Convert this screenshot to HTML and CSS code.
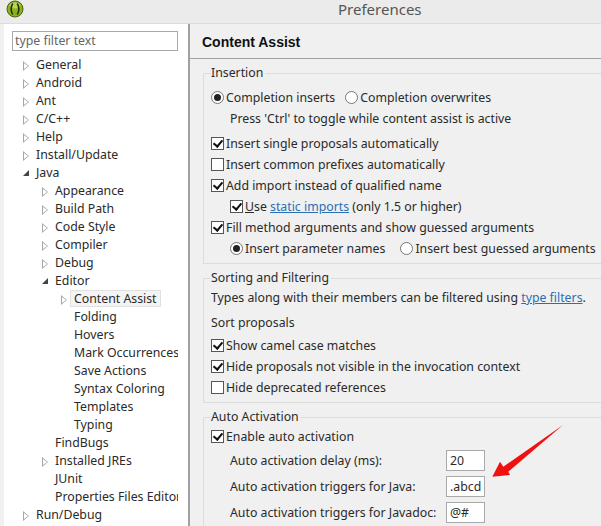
FILE: index.html
```html
<!DOCTYPE html>
<html lang="en">
<head>
  <meta charset="UTF-8">
  <title>Preferences</title>
  <link rel="stylesheet" href="styles.css">
</head>
<body>
  <header class="titlebar">
    <svg class="app-icon" width="18" height="18" viewBox="0 0 18 18">
      <circle cx="9" cy="9" r="8" fill="#8cb01e" stroke="#4d6414" stroke-width="1"/>
      <ellipse cx="9" cy="5.5" rx="5.5" ry="3" fill="#bcd65a"/>
      <path d="M6.8 3.5c-2.2 3-2.2 8 0 11M11.2 3.5c2.2 3 2.2 8 0 11" fill="none" stroke="#26330a" stroke-width="1.6"/>
    </svg>
    <span class="title">Preferences</span>
  </header>

  <main class="window">
    <aside class="sidebar">
      <div class="filter">type filter text</div>
      <ul class="tree">
        <li class="closed">General</li>
        <li class="closed">Android</li>
        <li class="closed">Ant</li>
        <li class="closed">C/C++</li>
        <li class="closed">Help</li>
        <li class="closed">Install/Update</li>
        <li class="open">Java</li>
        <li class="closed lvl1">Appearance</li>
        <li class="closed lvl1">Build Path</li>
        <li class="closed lvl1">Code Style</li>
        <li class="closed lvl1">Compiler</li>
        <li class="closed lvl1">Debug</li>
        <li class="open lvl1">Editor</li>
        <li class="closed lvl2"><span class="selected">Content Assist</span></li>
        <li class="lvl2">Folding</li>
        <li class="lvl2">Hovers</li>
        <li class="lvl2">Mark Occurrences</li>
        <li class="lvl2">Save Actions</li>
        <li class="lvl2">Syntax Coloring</li>
        <li class="lvl2">Templates</li>
        <li class="lvl2">Typing</li>
        <li class="lvl1">FindBugs</li>
        <li class="closed lvl1">Installed JREs</li>
        <li class="lvl1">JUnit</li>
        <li class="lvl1">Properties Files Editor</li>
        <li class="closed">Run/Debug</li>
      </ul>
    </aside>

    <section class="content">
      <h2 class="page-title">Content Assist</h2>

      <fieldset class="group insertion">
        <legend>Insertion</legend>
        <div class="row radios">
          <span class="opt"><i class="radio on"></i>Completion inserts</span>
          <span class="opt"><i class="radio"></i>Completion overwrites</span>
        </div>
        <div class="row note indent">Press 'Ctrl' to toggle while content assist is active</div>
        <div class="row"><i class="check on"></i>Insert single proposals automatically</div>
        <div class="row"><i class="check"></i>Insert common prefixes automatically</div>
        <div class="row"><i class="check on"></i>Add import instead of qualified name</div>
        <div class="row indent"><i class="check on"></i><span><u>U</u>se <a href="#">static imports</a> (only 1.5 or higher)</span></div>
        <div class="row"><i class="check on"></i>Fill method arguments and show guessed arguments</div>
        <div class="row radios wide indent">
          <span class="opt"><i class="radio on"></i>Insert parameter names</span>
          <span class="opt"><i class="radio"></i>Insert best guessed arguments</span>
        </div>
      </fieldset>

      <fieldset class="group sorting">
        <legend>Sorting and Filtering</legend>
        <div class="row">Types along with their members can be filtered using&nbsp;<a href="#">type filters</a>.</div>
        <div class="row sort-label">Sort proposals</div>
        <div class="row"><i class="check on"></i>Show camel case matches</div>
        <div class="row"><i class="check on"></i>Hide proposals not visible in the invocation context</div>
        <div class="row"><i class="check"></i>Hide deprecated references</div>
      </fieldset>

      <fieldset class="group activation">
        <legend>Auto Activation</legend>
        <div class="row"><i class="check on"></i>Enable auto activation</div>
        <div class="field indent"><label>Auto activation delay (ms):</label><span class="box">20</span></div>
        <div class="field indent"><label>Auto activation triggers for Java:</label><span class="box">.abcd</span></div>
        <div class="field indent"><label>Auto activation triggers for Javadoc:</label><span class="box">@#</span></div>
      </fieldset>
    </section>
  </main>

  <svg class="red-arrow" width="80" height="60" viewBox="0 0 80 60">
    <path d="M2.3 52.7 L10 37.7 L13.3 42.7 L73 1 L18.3 47.7 L20 51 Z" fill="#f01010"/>
  </svg>
</body>
</html>
```

FILE: styles.css
```css
html, body { height: 100%; }
body { margin: 0; width: 601px; height: 526px; overflow: hidden; position: relative; background: #f0f0f0; color: #2a2a2a; font-family: "Noto Sans", sans-serif; font-size: 12.3px; }

.titlebar { height: 23px; display: flex; align-items: flex-start; background: #ebebeb; border-bottom: 1px solid #dcdcdc; }
.app-icon { margin-left: 6px; }
.title { margin-left: 314px; font-size: 15px; line-height: 18px; color: #555; }

.window { display: flex; height: 502px; padding-left: 4px; }
.sidebar { width: 184px; flex: none; background: #fff; border-right: 2px solid #a0a0a0; overflow: hidden; }
.filter { margin: 7px 10px 5px 8px; height: 18px; line-height: 18px; border: 1px solid #a9a9a9; padding-left: 2px; color: #666; }
.tree { list-style: none; margin: 0; padding: 0; width: 174px; overflow: hidden; }
.tree li { height: 18px; line-height: 18px; padding-left: 32px; position: relative; white-space: nowrap; }
.tree li.lvl1 { padding-left: 51px; }
.tree li.lvl2 { padding-left: 70px; }

/* tree arrows: gray triangle with a white one on top */
.tree li.closed::before, .tree li.closed::after { content: ""; position: absolute; border-style: solid; border-color: transparent; }
.tree li.closed::before { left: 19px; top: 5px; border-width: 5px 0 5px 6px; border-left-color: #a8a8a8; }
.tree li.closed::after { left: 20px; top: 7px; border-width: 3px 0 3px 4px; border-left-color: #fff; }
.tree li.lvl1.closed::before { left: 38px; }
.tree li.lvl1.closed::after { left: 39px; }
.tree li.lvl2.closed::before { left: 57px; }
.tree li.lvl2.closed::after { left: 58px; }
.tree li.open::before { content: ""; position: absolute; left: 19px; top: 6px; border-bottom: 6px solid #444; border-left: 6px solid transparent; }
.tree li.lvl1.open::before { left: 38px; }

.selected { display: inline-block; height: 17px; line-height: 15px; margin-left: -4px; padding: 0 3px; background: #f4f4f4; border: 1px solid #e0e0e0; box-sizing: border-box; }

.content { flex: 1; min-width: 0; overflow: hidden; }
.page-title { margin: 0; height: 34px; line-height: 36px; padding-left: 12px; font-family: "Liberation Sans", sans-serif; font-size: 14px; font-weight: bold; color: #111; border-bottom: 1px solid #a0a0a0; }

.group { margin: 6px -20px 0 13px; padding: 0 0 0 7px; border: 1px solid #dcdcdc; border-right: none; min-width: 0; }
.group legend { padding: 0 2px 0 0; line-height: 16px; }
.insertion { height: 197px; }
.sorting { height: 131px; }
.activation { height: 120px; border-bottom: none; }

.row { display: flex; align-items: center; height: 21px; white-space: nowrap; }
.indent { padding-left: 19px; }
.radios .opt { display: flex; align-items: center; margin-right: 10px; }
.radios.wide .opt { margin-right: 15px; }

.insertion .radios:first-of-type { margin-top: 6px; }
.insertion .note { height: 20px; margin-bottom: 5px; }
.sorting .row:first-of-type { margin-top: 1px; }
.sort-label { margin-top: 4px; margin-bottom: 2px; }
.activation .row { margin-top: 1px; }

.check, .radio { flex: none; display: inline-block; width: 13px; height: 13px; box-sizing: border-box; background: #fff; border: 1px solid #555; margin-right: 2px; position: relative; }
.radio { border-radius: 50%; border-color: #777; }
.radio.on::after { content: ""; position: absolute; left: 2px; top: 2px; width: 7px; height: 7px; border-radius: 50%; background: #222; }
.check.on::after { content: ""; position: absolute; left: 3px; top: 0; width: 4px; height: 7px; border: solid #111; border-width: 0 2px 2px 0; transform: rotate(40deg); }

a { color: #2a6fb5; }

.field { display: flex; align-items: center; height: 26px; white-space: nowrap; }
.field label { width: 216px; flex: none; }
.box { width: 39px; height: 21px; line-height: 20px; box-sizing: border-box; padding-left: 3px; background: #fff; border: 1px solid #a9a9a9; }

.red-arrow { position: absolute; left: 490px; top: 424px; }
```
